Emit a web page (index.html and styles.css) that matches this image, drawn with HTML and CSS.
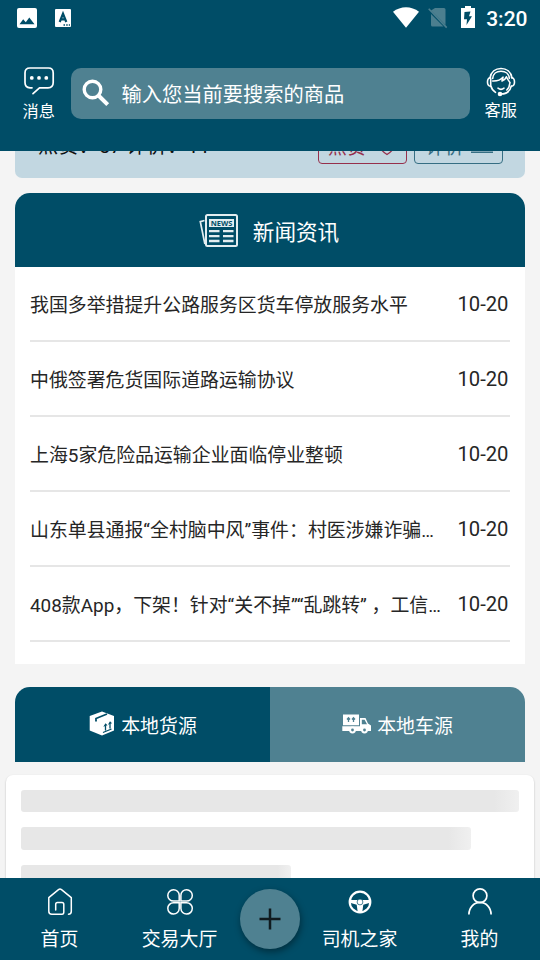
FILE: index.html
```html
<!DOCTYPE html>
<html lang="zh-CN">
<head>
<meta charset="utf-8">
<title>首页</title>
<link rel="stylesheet" href="styles.css">
</head>
<body>
<div class="app">
  <header class="header">
    <div class="status">
      <svg class="st-img" width="20" height="20" viewBox="0 0 20 20"><rect width="20" height="20" rx="2" fill="#fff"/><path d="M2.5 16.2 6.2 11.3 8.8 14.3 12.3 9.6 17.5 16.2z" fill="#004d67"/></svg>
      <svg class="st-a" width="16" height="18" viewBox="0 0 16 18"><rect width="16" height="18" rx="1" fill="#fff"/><path d="M4.700 13 8 4.8 11.300 13M6 10.4h4" fill="none" stroke="#004d67" stroke-width="2.2"/><path d="M8.5 16h1.5M11.2 16h1.5M13.8 16h1.2" stroke="#004d67" stroke-width="1.5"/></svg>
      <span class="grow"></span>
      <svg class="st-wifi" width="26" height="21" viewBox="0 0 26 21"><path d="M0 4.8C7.5-1.4 18.500-1.400 26 4.800L13 20.700z" fill="#fff"/></svg>
      <svg class="st-sim" width="20" height="22" viewBox="0 0 20 22"><path d="M7 1h9q1.500 0 1.500 1.500V18L3 3.500zM3 7l12.500 12.500H4.500Q3 19.500 3 18z" fill="#4c7f8f"/><path d="M.7 1.800 18.700 20.600" stroke="#4c7f8f" stroke-width="1.600"/></svg>
      <svg class="st-bat" width="14" height="22" viewBox="0 0 14 22"><path d="M4 0h6v2h4v20H0V2h4z" fill="#fff"/><path d="M9.500 5.500 3.500 6 3 13.300h3L5.500 19 11 10.300H8z" fill="#004d67"/></svg>
      <span class="clock">3:20</span>
    </div>
    <div class="topbar">
      <div class="action action-msg">
        <svg width="32" height="30" viewBox="0 0 32 30" fill="none" stroke="#fff" stroke-width="1.700" stroke-linecap="round" stroke-linejoin="round"><path d="M9 21.800H7Q2 21.500 2 16.500V7Q2 2 7 2H25.500Q30.200 2 30.200 7V16.500Q30.200 21.800 25 21.800H16.500L10 27.600"/><g fill="#fff" stroke="none"><circle cx="8.800" cy="11.900" r="1.900"/><circle cx="16" cy="11.900" r="1.900"/><circle cx="23.300" cy="11.900" r="1.900"/></g></svg>
        <span>消息</span>
      </div>
      <div class="search">
        <svg width="28" height="28" viewBox="0 0 28 28" fill="none" stroke="#fff"><circle cx="10.500" cy="10.500" r="8.300" stroke-width="3.400"/><path d="M16.500 16.500 25.700 25.700" stroke-width="4"/></svg>
        <span>输入您当前要搜索的商品</span>
      </div>
      <div class="action action-help">
        <svg width="30" height="30" viewBox="0 0 30 30" fill="none" stroke="#fff" stroke-width="1.600" stroke-linecap="round" stroke-linejoin="round"><path d="M4 11C5 4.800 9.500 1.500 15 1.500S25 4.800 26 11"/><path d="M6.700 11.500C7 7 10.500 4.300 15 4.300S23 7 23.300 11.500"/><path d="M4.500 10.500Q1.500 11 1.500 15T4.500 19.200M25.500 10.500Q28.500 11 28.500 15T25.500 19.200" stroke-width="1.600"/><path d="M4.700 11.500V18.500Q5.700 22.800 9.500 25.300M6.700 14C10 14.200 14 13.500 17 10.200 16.700 12.500 16.700 12.800 16 14 18.500 12.900 19.800 11.500 20.400 9.700 21.500 12.500 22.800 13.800 24 15.500Q23.500 20.500 20.800 23M25.300 19C24 24.500 20 27 15 27"/><path d="M12 21.200Q15 23.500 18 21.200"/><circle cx="14" cy="27" r="1.500" fill="#fff"/></svg>
        <span>客服</span>
      </div>
    </div>
  </header>

  <main class="content">
    <section class="post">
      <span class="post-stats">点赞：57 评价：11</span>
      <span class="pill pill-like"><span>点赞</span><svg width="20" height="20" viewBox="0 0 20 20" fill="none" stroke="currentColor" stroke-width="1.300"><path d="M10 17.500C-1 10.500 3 2.500 10 6 17 2.500 21 10.500 10 17.500z"/></svg></span>
      <span class="pill pill-comment"><span>评价</span><svg width="24" height="20" viewBox="0 0 24 20" fill="none" stroke="currentColor" stroke-width="1.500"><path d="M5 11 15 2l2 2-9 9M1 15.200h22"/></svg></span>
    </section>

    <section class="news">
      <h2 class="news-head">
        <svg width="40" height="34" viewBox="0 0 40 34" fill="none" stroke="#e3edf0"><path d="M5.500 6.500 1.300 7.700 5.900 30" stroke-width="1.700"/><rect x="7" y="1" width="31" height="31" rx="1.500" stroke-width="2"/><path d="M10 5h25v8H10z" fill="#e3edf0" stroke="none"/><path d="M10 17.200h10.500M24 17.200h10.500M10 22.200h10.500M24 22.200h10.500M10 27h10.500M24 27h10.500" stroke-width="2.300"/><text x="22.500" y="11.700" text-anchor="middle" class="news-mark">NEWS</text></svg>
        <span>新闻资讯</span>
      </h2>
      <ul class="news-list">
        <li><span class="title">我国多举措提升公路服务区货车停放服务水平</span><time>10-20</time></li>
        <li><span class="title">中俄签署危货国际道路运输协议</span><time>10-20</time></li>
        <li><span class="title">上海5家危险品运输企业面临停业整顿</span><time>10-20</time></li>
        <li><span class="title">山东单县通报“全村脑中风”事件：村医涉嫌诈骗…</span><time>10-20</time></li>
        <li><span class="title">408款App，下架！针对“关不掉”“乱跳转” ，工信…</span><time>10-20</time></li>
      </ul>
    </section>

    <div class="tabs">
      <div class="tab tab-active">
        <svg width="26" height="26" viewBox="0 0 26 26"><path d="M13 .5 25 5V19.500L13 24.500.7 19.500V5z" fill="#fff"/><path d="M7 10.500V7.500L18 3" fill="none" stroke="#004d67" stroke-width="1.800"/><path d="M14 21.500 22.500 18M16.500 19.500v-5M21 17.500v-5" fill="none" stroke="#004d67" stroke-width="1.300"/><path d="M14.300 15.800 16.500 12.200 18.500 14.300zM18.900 13.800 21 10.200 23 12.300z" fill="#004d67"/></svg>
        <span>本地货源</span>
      </div>
      <div class="tab tab-truck">
        <svg width="30" height="20" viewBox="0 0 30 20"><path d="M1 .5h16v10.800H1zM.3 12.300H18V4h5.500L26 9.500l3 2V17H.3z" fill="#fff"/><path d="M19.800 5.800h2.800L25 10.300H19.800z" fill="#4f8191"/><path d="M6.500 8V4M11.500 8V4M5 5.500 6.500 3.700 8 5.500M10 5.500 11.500 3.700 13 5.500" fill="none" stroke="#4f8191" stroke-width="1.300"/><g fill="#fff"><circle cx="10.500" cy="16" r="3.400"/><circle cx="22.500" cy="16" r="3.400"/></g><g fill="#4f8191"><circle cx="10.500" cy="16" r="1.400"/><circle cx="22.500" cy="16" r="1.400"/></g></svg>
        <span>本地车源</span>
      </div>
    </div>

    <div class="skeleton">
      <div class="bone"></div>
      <div class="bone bone-mid"></div>
      <div class="bone bone-short"></div>
    </div>
  </main>

  <nav class="nav">
    <div class="nav-item">
      <svg width="30" height="30" viewBox="0 0 30 30" fill="none" stroke="#fff" stroke-width="1.500" stroke-linecap="round" stroke-linejoin="round"><path d="M23.500 27.300Q26.300 27.300 26.300 24.300V10.700L16.500 2.700Q15 1.500 13.500 2.700L3.800 10.700V24.300Q3.800 27.300 6.800 27.300H17Q18.800 27.300 18.800 25V17.500Q18.800 15.500 17 15.500H12.500Q10.700 15.500 10.700 17.500V23"/></svg>
      <span>首页</span>
    </div>
    <div class="nav-item">
      <svg width="30" height="30" viewBox="0 0 30 30" fill="none" stroke="#fff" stroke-width="1.500"><path d="M14.200 14.100H8.500A5.700 5.700 0 1 1 14.200 8.300zM15.900 14.100H21.600A5.700 5.700 0 1 0 15.900 8.300zM14.200 15.700H8.500A5.700 5.700 0 1 0 14.200 21.500zM15.900 15.700H21.600A5.700 5.700 0 1 1 15.900 21.500z"/></svg>
      <span>交易大厅</span>
    </div>
    <div class="nav-gap"><button class="fab" aria-label="add"><svg width="24" height="24" viewBox="0 0 24 24"><path d="M12 1.500v21M1.500 12h21" stroke="#101b1f" stroke-width="2.500"/></svg></button></div>
    <div class="nav-item">
      <svg width="30" height="30" viewBox="0 0 30 30" fill="none" stroke="#fff"><circle cx="15" cy="15" r="10.300" stroke-width="2.200"/><path d="M5 13h20v2.800l-6.700 2-1 7.200h-4.600l-1-7.200L5 15.800z" fill="#fff" stroke="none"/><circle cx="15" cy="15" r="2.900" fill="#fff" stroke="#004d67" stroke-width=".7"/></svg>
      <span>司机之家</span>
    </div>
    <div class="nav-item">
      <svg width="30" height="30" viewBox="0 0 30 30" fill="none" stroke="#fff" stroke-width="1.700"><circle cx="15" cy="8.800" r="6.900"/><path d="M3.900 27.500C3.900 20.500 9 15.400 15 15.400S26.100 20.500 26.100 27.500"/></svg>
      <span>我的</span>
    </div>
  </nav>
</div>
</body>
</html>
```
FILE: styles.css
```css
* { box-sizing: border-box; }
body {
  margin: 0;
  font-family: Roboto, "Noto Sans CJK SC", sans-serif;
  font-size: 18.9px;
  color: #262626;
}
svg { display: block; flex: none; }
.app {
  width: 540px;
  height: 960px;
  display: flex;
  flex-direction: column;
  overflow: hidden;
  background: #f4f4f4;
}
.header {
  flex: none;
  height: 151.400px;
  background: #004d67;
  color: #fff;
}
.status {
  display: flex;
  align-items: center;
  height: 36px;
  padding: 0 12.500px 0 17px;
}
.st-a { margin-left: 18px; }
.grow { flex: 1; }
.st-wifi { margin: 0 9px 2px 0; }
.st-sim { margin-right: 13px; }
.st-bat { margin: 0 11px 2px 0; }
.clock { font-size: 21px; font-weight: 500; line-height: 36px; padding-top: 2px; }
.topbar {
  display: flex;
  height: 115px;
  padding-top: 28px;
}
.action {
  display: flex;
  flex-direction: column;
  align-items: center;
  width: 70.500px;
  padding: 2px 0 0 7px;
  font-size: 16.200px;
  line-height: 24px;
}
.action-msg span { margin-top: 4px; }
.action-help { padding: 3px 8px 0 0; }
.action-help span { margin-top: 2px; }
.search {
  display: flex;
  align-items: center;
  gap: 12px;
  width: 399px;
  height: 51px;
  margin-top: 3.500px;
  padding-left: 11px;
  border-radius: 10px;
  background: #4f8191;
  font-size: 20.250px;
}
.content {
  flex: 1;
  min-height: 0;
  overflow: hidden;
}
.post {
  display: flex;
  align-items: center;
  height: 60px;
  margin: -33px 15px 15px;
  padding: 0 22px 0 23px;
  border-radius: 0 0 7px 7px;
  background: #c2d7e1;
}
.post-stats { flex: 1; padding-bottom: 7px; color: #111; font-size: 20.250px; }
.pill {
  display: flex;
  align-items: center;
  justify-content: space-between;
  width: 89px;
  height: 31px;
  margin-left: 7px;
  padding: 0 9px 3px;
  border: 1.500px solid;
  border-radius: 4px;
}
.pill span { padding-bottom: 2px; }
.pill-like { color: #96304c; }
.pill-comment { color: #356e83; padding: 0 8px 3px 11px; }
.news {
  height: 471px;
  margin: 0 15px;
  border-radius: 15px 15px 0 0;
  background: #fff;
}
.news-head {
  display: flex;
  align-items: center;
  justify-content: center;
  gap: 14px;
  height: 73.500px;
  margin: 0;
  padding: 1px 2px 0 0;
  border-radius: 15px 15px 0 0;
  background: #004d67;
  color: #fff;
  font-size: 21.600px;
  font-weight: 400;
}
.news-mark { font: bold 7.500px "Open Sans", sans-serif; fill: #004d67; stroke: none; }
.news-list {
  margin: 0;
  padding: 0 15px;
  list-style: none;
}
.news-list li {
  display: flex;
  align-items: center;
  justify-content: space-between;
  height: 75px;
  border-bottom: 2px solid #e6e6e6;
}
.title { white-space: nowrap; }
.news-list time { font-size: 20.250px; padding: 1px 1.500px 0 0; }
.tabs {
  display: flex;
  height: 75px;
  margin: 22.500px 15px 0;
  border-radius: 15px 15px 0 0;
  overflow: hidden;
}
.tab {
  width: 255px;
  display: flex;
  align-items: center;
  justify-content: center;
  gap: 6px;
  padding-left: 1px;
  background: #4f8191;
  color: #fff;
}
.tab-active { background: #004d67; }
.tab-truck { gap: 5px; padding-left: 0; }
.skeleton {
  display: flex;
  flex-direction: column;
  gap: 15px;
  height: 160px;
  margin: 13px 6px 0;
  padding: 15px;
  border-radius: 7px;
  background: #fff;
  box-shadow: 0 1px 2px rgba(0, 0, 0, .25);
}
.bone {
  flex: none;
  height: 22.500px;
  border-radius: 3px;
  background: linear-gradient(90deg, #e7e7e7 95%, #f0f0f0);
}
.bone-mid { width: 450px; }
.bone-short { width: 270px; }
.nav {
  flex: none;
  display: flex;
  height: 82.500px;
  background: #004d67;
  color: #fff;
}
.nav-item {
  width: 120px;
  display: flex;
  flex-direction: column;
  align-items: center;
  padding: 9.500px 0 0;
  line-height: 28px;
}
.nav-item span { margin: 9px 1px 0 0; }
.nav-gap { width: 60px; padding-top: 11px; }
.fab {
  display: flex;
  align-items: center;
  justify-content: center;
  width: 60px;
  height: 60px;
  padding: 0;
  border: 0;
  border-radius: 50%;
  background: #4f8191;
  box-shadow: 1px 3px 7px rgba(0, 0, 0, .4);
}
```
